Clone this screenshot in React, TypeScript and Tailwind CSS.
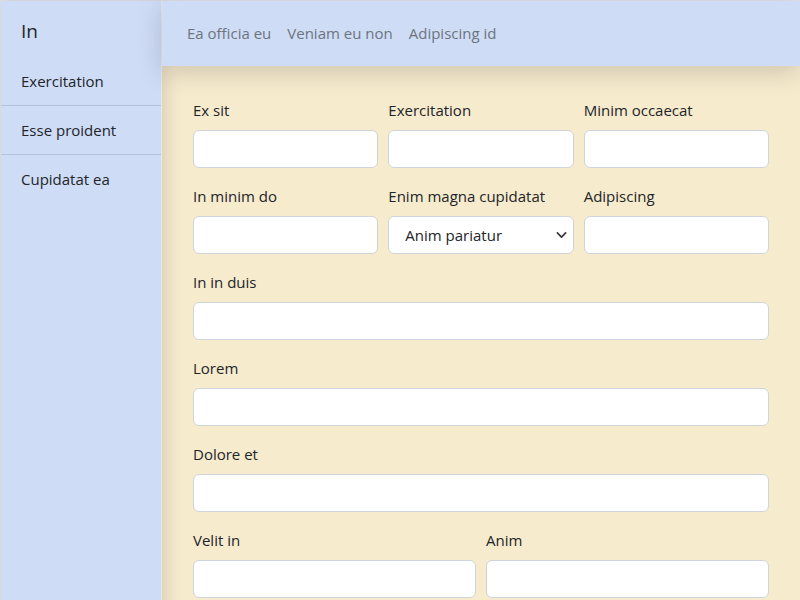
import React from 'react';

const navItems = ['Exercitation', 'Esse proident', 'Cupidatat ea'];
const topLinks = ['Ea officia eu', 'Veniam eu non', 'Adipiscing id'];

const Field = ({ label, children }: { label: string; children?: React.ReactNode }) => (
  <div className="flex flex-col">
    <label className="mb-2 leading-6 text-[#212529]">{label}</label>
    {children ?? (
      <input
        type="text"
        className="h-[38px] w-full rounded-[6px] border border-[#ced4da] bg-white px-3 outline-none"
      />
    )}
  </div>
);

const SelectField = ({ label, value }: { label: string; value: string }) => (
  <Field label={label}>
    <div className="relative">
      <select
        defaultValue={value}
        className="h-[38px] w-full appearance-none rounded-[6px] border border-[#ced4da] bg-white pl-4 pr-9 text-[#212529] outline-none"
      >
        <option>{value}</option>
      </select>
      <svg
        className="pointer-events-none absolute right-[7px] top-1/2 -translate-y-1/2"
        width="11"
        height="11"
        viewBox="0 0 16 16"
        fill="none"
        stroke="#343a40"
        strokeWidth="2.5"
        strokeLinecap="round"
        strokeLinejoin="round"
      >
        <path d="M2 5l6 6 6-6" />
      </svg>
    </div>
  </Field>
);

export default function App() {
  return (
    <div
      className="flex min-h-screen border-l border-t border-[#dee2e6] text-[15px]"
      style={{ fontFamily: '"Open Sans", "Noto Sans", sans-serif' }}
    >
      {/* sidebar */}
      <aside className="relative z-10 w-[161px] shrink-0 border-r border-[#e3e7ee] bg-[#cfdcf6] text-[#212529] shadow-[4px_0_16px_rgba(0,0,0,0.13)]">
        <div className="flex h-[56px] items-center px-5 pt-1 text-[19px]">In</div>
        <ul>
          {navItems.map((item, i) => (
            <li
              key={item}
              className={`flex h-[49px] items-center px-5 ${i < navItems.length - 1 ? 'border-b border-[#b6c2d8]' : ''}`}
            >
              {item}
            </li>
          ))}
        </ul>
      </aside>

      <div className="flex min-w-0 flex-1 flex-col">
        {/* top bar */}
        <header className="relative z-20 flex h-[65px] items-center gap-4 bg-[#cfdcf6] px-[25px] text-[#6c757d] shadow-[0_6px_26px_rgba(0,0,0,0.17)]">
          {topLinks.map((l) => (
            <span key={l}>{l}</span>
          ))}
        </header>

        {/* form */}
        <main className="flex-1 bg-[#f7ebce] px-[31px] pb-8 pt-8">
          <div className="flex flex-col gap-4">
            <div className="grid grid-cols-3 gap-[10px]">
              <Field label="Ex sit" />
              <Field label="Exercitation" />
              <Field label="Minim occaecat" />
            </div>
            <div className="grid grid-cols-3 gap-[10px]">
              <Field label="In minim do" />
              <SelectField label="Enim magna cupidatat" value="Anim pariatur" />
              <Field label="Adipiscing" />
            </div>
            <Field label="In in duis" />
            <Field label="Lorem" />
            <Field label="Dolore et" />
            <div className="grid grid-cols-2 gap-[10px]">
              <Field label="Velit in" />
              <Field label="Anim" />
            </div>
          </div>
        </main>
      </div>
    </div>
  );
}
